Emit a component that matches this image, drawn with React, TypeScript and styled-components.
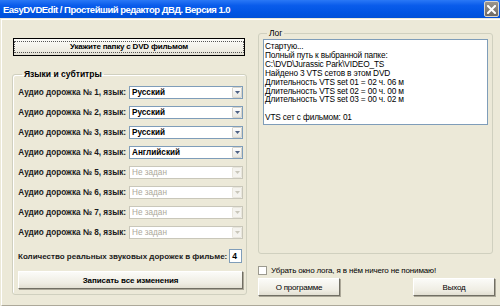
import React from 'react';
import styled, { createGlobalStyle } from 'styled-components';

const GlobalStyle = createGlobalStyle`
	html, body {
		margin: 0;
		padding: 0;
		width: 500px;
		height: 306px;
		overflow: hidden;
		background: #ece9d8;
		font-family: 'Liberation Sans', Arial, sans-serif;
	}
`;

const tracks = [
	{ lang: 'Русский', enabled: true },
	{ lang: 'Русский', enabled: true },
	{ lang: 'Русский', enabled: true },
	{ lang: 'Английский', enabled: true },
	{ lang: 'Не задан', enabled: false },
	{ lang: 'Не задан', enabled: false },
	{ lang: 'Не задан', enabled: false },
	{ lang: 'Не задан', enabled: false },
];

const logLines = [
	'Стартую...',
	'Полный путь к выбранной папке:',
	'C:\\DVD\\Jurassic Park\\VIDEO_TS',
	'Найдено 3 VTS сетов в этом DVD',
	'Длительность VTS set 01 = 02 ч. 06 м',
	'Длительность VTS set 02 = 00 ч. 00 м',
	'Длительность VTS set 03 = 00 ч. 02 м',
	'',
	'VTS сет с фильмом: 01',
];

const App = () => {
	return (
		<Window>
			<GlobalStyle />
			<TitleBar>
				<TitleText>EasyDVDEdit / Простейший редактор ДВД. Версия 1.0</TitleText>
				<CloseButton>
					<svg width="9" height="9" viewBox="0 0 9 9">
						<path d="M1 1 L8 8 M8 1 L1 8" stroke="#fff" strokeWidth="2" strokeLinecap="square" />
					</svg>
				</CloseButton>
			</TitleBar>
			<Body>
				<LeftColumn>
					<DefaultButton>
						<span>Укажите папку с DVD фильмом</span>
					</DefaultButton>
					<GroupBox>
						<Legend>Языки и субтитры</Legend>
						<TrackList>
							{tracks.map((t, i) => (
								<TrackRow key={i}>
									<FieldLabel>Аудио дорожка № {i + 1}, язык:</FieldLabel>
									<Select $disabled={!t.enabled}>
										<SelectText>{t.lang}</SelectText>
										<ArrowButton $disabled={!t.enabled}>
											<svg width="5" height="3" viewBox="0 0 5 3">
												<path d="M0 0 H5 L2.5 3 Z" fill={t.enabled ? '#4d6185' : '#c9c7ba'} />
											</svg>
										</ArrowButton>
									</Select>
								</TrackRow>
							))}
						</TrackList>
						<CountRow>
							<CountLabel>Количество реальных звуковых дорожек в фильме:</CountLabel>
							<CountInput>4</CountInput>
						</CountRow>
						<WideButton>Записать все изменения</WideButton>
					</GroupBox>
				</LeftColumn>
				<RightColumn>
					<LogGroup>
						<Legend $light>Лог</Legend>
						<LogArea>
							{logLines.map((l, i) => (
								<LogLine key={i}>{l || '\u00a0'}</LogLine>
							))}
						</LogArea>
					</LogGroup>
					<CheckRow>
						<CheckBox />
						<CheckLabel>Убрать окно лога, я в нём ничего не понимаю!</CheckLabel>
					</CheckRow>
					<ButtonRow>
						<PlainButton>О программе</PlainButton>
						<PlainButton>Выход</PlainButton>
					</ButtonRow>
				</RightColumn>
			</Body>
		</Window>
	);
};

export default App;

const Window = styled.div`
	width: 500px;
	height: 306px;
	display: flex;
	flex-direction: column;
	background: #ece9d8;
`;

const TitleBar = styled.div`
	height: 18px;
	display: flex;
	align-items: center;
	justify-content: space-between;
	padding: 0 1px 0 3px;
	background: linear-gradient(#2a78f6 0%, #0a5ceb 30%, #0054e3 70%, #0050d8 100%);
`;

const TitleText = styled.div`
	color: #fff;
	font-weight: bold;
	font-size: 9.5px;
	letter-spacing: -0.5px;
	white-space: nowrap;
`;

const CloseButton = styled.div`
	width: 13px;
	height: 14px;
	display: flex;
	align-items: center;
	justify-content: center;
	background: linear-gradient(#9b958d, #6f6a64);
	border: 1px solid #d9d6cf;
	border-radius: 2px;
`;

const Body = styled.div`
	flex: 1;
	display: flex;
	gap: 11px;
	padding: 0 5px 4px 3px;
	border-top: 1px solid #fff;
	border-left: 1px solid #fff;
	border-bottom: 1px solid #aca899;
	margin: 1px 0 0 1px;
`;

const LeftColumn = styled.div`
	width: 235px;
	display: flex;
	flex-direction: column;
	padding: 18px 0 0 7px;
	gap: 14px;
`;

const RightColumn = styled.div`
	flex: 1;
	display: flex;
	flex-direction: column;
	padding-top: 9px;
	padding-right: 2px;
`;

const ButtonBase = styled.div`
	box-sizing: border-box;
	display: flex;
	align-items: center;
	justify-content: center;
	font-size: 8px;
	color: #000;
	background: linear-gradient(#fbfbf8, #efede3 70%, #e2dfd2);
	border-top: 1px solid #fff;
	border-left: 1px solid #fff;
	border-right: 1px solid #716f64;
	border-bottom: 1px solid #716f64;
	box-shadow: 1px 1px 0 #aca899;
`;

const DefaultButton = styled(ButtonBase)`
	height: 18px;
	width: 232px;
	margin-left: 1px;
	font-weight: bold;
	border: 1px solid #000;
	box-shadow: none;
	letter-spacing: -0.2px;

	span {
		padding: 0 2px;
		border: 1px dotted #555;
		width: 226px;
		text-align: center;
		line-height: 10px;
	}
`;

const WideButton = styled(ButtonBase)`
	height: 18px;
	width: 225px;
	margin-top: 8px;
	font-weight: bold;
	font-size: 8px;
	letter-spacing: -0.1px;
`;

const PlainButton = styled(ButtonBase)`
	height: 18px;
	width: 82px;
	font-size: 8px;
	letter-spacing: -0.2px;
`;

const GroupBox = styled.fieldset`
	margin: 0;
	padding: 0 3px 7px 5px;
	height: 225px;
	box-sizing: border-box;
	border: 1px solid #d0d0bf;
	border-radius: 3px;
	display: flex;
	flex-direction: column;
	box-shadow: inset 1px 1px 0 #fff;
`;

const Legend = styled.legend<{ $light?: boolean }>`
	padding: 0 2px;
	margin-left: 4px;
	font-size: 8.5px;
	font-weight: ${(p) => (p.$light ? 'normal' : 'bold')};
	color: #000;
	line-height: 9px;
`;

const TrackList = styled.div`
	display: flex;
	flex-direction: column;
	gap: 7px;
	margin-top: 7px;
`;

const TrackRow = styled.div`
	display: flex;
	align-items: center;
	height: 13px;
`;

const FieldLabel = styled.div`
	box-sizing: border-box;
	font-size: 8.2px;
	font-weight: bold;
	color: #1a1a1a;
	white-space: nowrap;
	width: 111px;
	text-align: right;
	padding-right: 3px;
`;

const Select = styled.div<{ $disabled: boolean }>`
	box-sizing: border-box;
	width: 114px;
	height: 13px;
	display: flex;
	align-items: center;
	background: #fff;
	border: 1px solid ${(p) => (p.$disabled ? '#c9c7ba' : '#7f9db9')};
	color: ${(p) => (p.$disabled ? '#aca899' : '#000')};
	font-weight: ${(p) => (p.$disabled ? 'normal' : 'bold')};
	font-size: 8.2px;
	padding-left: 2px;
`;

const SelectText = styled.div`
	flex: 1;
	white-space: nowrap;
`;

const ArrowButton = styled.div<{ $disabled: boolean }>`
	box-sizing: border-box;
	width: 10px;
	height: 11px;
	display: flex;
	align-items: center;
	justify-content: center;
	background: ${(p) => (p.$disabled ? '#f4f3ee' : 'linear-gradient(#fdfdfd, #e6e6e0)')};
	border: 1px solid ${(p) => (p.$disabled ? '#e8e6dc' : '#d6d4cc')};
	border-radius: 1px;
`;

const CountRow = styled.div`
	display: flex;
	align-items: center;
	margin-top: 10px;
	height: 14px;
`;

const CountLabel = styled.div`
	font-size: 8px;
	font-weight: bold;
	color: #1a1a1a;
	white-space: nowrap;
	padding-right: 2px;
`;

const CountInput = styled.div`
	box-sizing: border-box;
	width: 13px;
	height: 14px;
	background: #fff;
	border: 1px solid #7f9db9;
	font-size: 8.5px;
	font-weight: bold;
	padding-left: 2px;
	line-height: 12px;
`;

const LogGroup = styled.fieldset`
	margin: 0;
	padding: 1px 4px 3px 4px;
	height: 225px;
	box-sizing: border-box;
	border: 1px solid #d0d0bf;
	border-radius: 3px;
	display: flex;
	flex-direction: column;
`;

const LogArea = styled.div`
	flex: 1;
	background: #fff;
	border: 1px solid #7f9db9;
	padding: 2px 1px;
	overflow: hidden;
`;

const LogLine = styled.div`
	font-size: 8.3px;
	line-height: 8.9px;
	color: #000;
	white-space: nowrap;
	letter-spacing: -0.15px;
`;

const CheckRow = styled.div`
	display: flex;
	align-items: center;
	gap: 4px;
	margin-top: 11px;
	height: 10px;
`;

const CheckBox = styled.div`
	box-sizing: border-box;
	width: 9px;
	height: 9px;
	background: #fff;
	border: 1px solid #9c9a8f;
`;

const CheckLabel = styled.div`
	font-size: 8px;
	color: #000;
	letter-spacing: -0.15px;
	white-space: nowrap;
`;

const ButtonRow = styled.div`
	display: flex;
	justify-content: space-between;
	margin-top: 3px;
	margin-right: -2px;
`;
